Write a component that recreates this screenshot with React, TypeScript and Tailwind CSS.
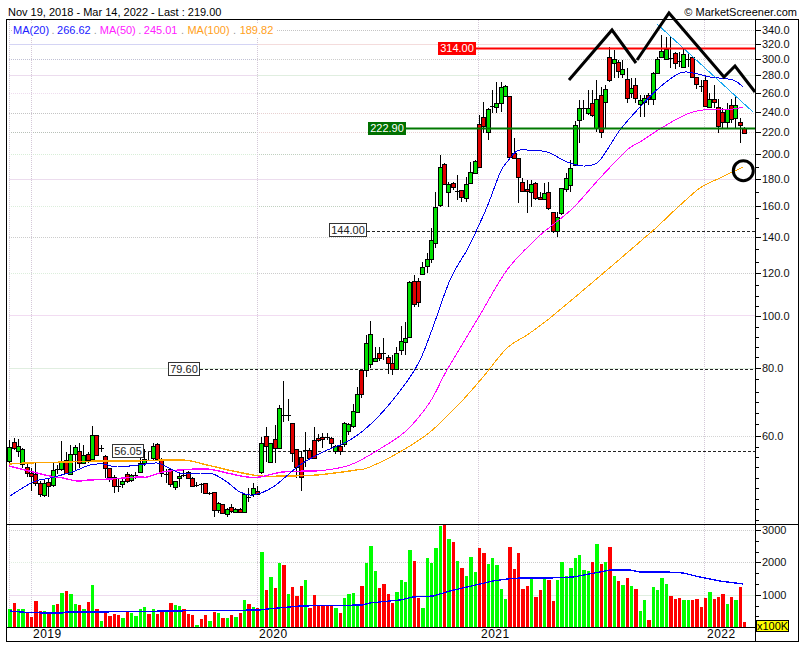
// Weekly candlestick chart with moving averages and a volume pane.
// Drawing coordinates in the svgs are page pixels, kept by each viewBox.

const PLOT_LEFT = 9.3;
const STEP = 4.348;

// top of each volume bar, read off the picture (3x coordinates, bar foot at 336)
const volTops = [
  282, 264, 282, 282, 294, 306, 258, 288, 288, 297,
  270, 267, 234, 228, 237, 267, 270, 282, 261, 210,
  282, 318, 291, 303, 297, 300, 309, 291, 294, 303,
  282, 276, 297, 282, 297, 291, 288, 264, 270, 273,
  282, 297, 300, 330, 312, 300, 318, 291, 294, 309,
  309, 300, 306, 294, 255, 267, 276, 279, 111, 225,
  186, 219, 144, 150, 237, 216, 243, 213, 195, 279,
  240, 270, 273, 273, 273, 279, 294, 249, 237, 234,
  273, 213, 144, 93, 168, 219, 207, 237, 264, 231,
  195, 201, 105, 138, 249, 279, 129, 144, 99, 33,
  28, 72, 81, 138, 159, 183, 126, 171, 99, 114,
  147, 129, 150, 222, 252, 96, 162, 114, 222, 213,
  192, 246, 225, 186, 195, 258, 195, 141, 183, 159,
  129, 120, 165, 168, 141, 87, 147, 141, 96, 183,
  198, 210, 189, 213, 222, 288, 255, 315, 216, 225,
  189, 207, 243, 252, 249, 255, 255, 255, 252, 276,
  249, 231, 252, 246, 237, 267, 246, 255, 216, 321,
];

const volColors = [
  "grggrrrrgr", "grgrggrgrg", "rgrrrrgrgg", "ggrgrrgrgg",
  "rrrgrrgrgr", "grgrgrgrgr", "grgrgrrrgr", "rrrrrgrggg",
  "grgggrrrrg", "gggrrggggg", "rgrgrgggrr", "gggggrrrrr",
  "grrgrrgggg", "ggggrgrgrg", "rgrgrggrgg", "ggrrrggrrr",
  "rgrrrgrgrr",
].join("");

type Row = [number, number, number, number];

const toPage = (rows: Row[], off: number) =>
  rows.map((r) => r.map((z) => off + z / 3) as Row);

// [body top, body bottom, high, low]
const candles: Row[] = [
  ...toPage(
    [
      [202, 243, 180, 248], [186, 205, 175, 210], [198, 214, 178, 232], [207, 252, 205, 265], [260, 280, 245, 292],
      [280, 287, 265, 332], [283, 310, 248, 318], [308, 341, 302, 352], [308, 344, 300, 352], [306, 319, 295, 350],
      [271, 314, 250, 320], [266, 267, 255, 282], [244, 268, 182, 272], [241, 280, 215, 280], [222, 282, 195, 282],
      [202, 222, 196, 270], [214, 250, 190, 265], [226, 248, 195, 252], [223, 241, 215, 248], [166, 237, 138, 240],
      [166, 225, 166, 225], [205, 205, 195, 215], [229, 265, 225, 295], [265, 292, 265, 305], [290, 317, 285, 338],
      [318, 318, 295, 335], [304, 313, 292, 325], [281, 303, 275, 310], [286, 300, 282, 305], [286, 286, 275, 298],
      [250, 275, 225, 280], [237, 250, 208, 258], [239, 239, 215, 240], [198, 235, 190, 240], [192, 237, 190, 240],
      [238, 278, 235, 290], [282, 282, 268, 310], [268, 312, 268, 320], [303, 322, 302, 330], [288, 295, 280, 322],
      [284, 284, 270, 290], [277, 295, 272, 298], [295, 318, 292, 320], [314, 314, 305, 320], [313, 313, 308, 340],
      [310, 340, 310, 342], [338, 338, 335, 345], [337, 390, 337, 412], [370, 390, 367, 400], [373, 400, 373, 403],
      [388, 402, 385, 410], [382, 392, 372, 398], [388, 395, 385, 398], [388, 395, 385, 398], [343, 395, 340, 398],
      [350, 350, 325, 365], [323, 343, 308, 350], [332, 342, 318, 345], [190, 275, 172, 283], [169, 198, 142, 245],
      [190, 245, 190, 250], [178, 205, 135, 250], [85, 205, 75, 205], [106, 106, 3, 125], [106, 106, 57, 123],
      [130, 220, 130, 245], [208, 262, 208, 295], [232, 292, 212, 332], [210, 210, 155, 262], [210, 235, 205, 238],
      [181, 233, 140, 235], [175, 181, 162, 185], [170, 178, 160, 203], [170, 175, 160, 180], [175, 190, 170, 205],
      [199, 214, 195, 222], [199, 214, 180, 225], [130, 193, 125, 200], [133, 152, 128, 165], [92, 138, 72, 145],
      [43, 95, 22, 98],
    ],
    380
  ),
  ...toPage(
    [
      [450, 523, 450, 535], [370, 450, 345, 470], [343, 432, 303, 445], [414, 422, 380, 422], [400, 415, 380, 422],
      [400, 400, 353, 420], [412, 430, 405, 462], [428, 447, 405, 465], [400, 447, 382, 450], [364, 389, 318, 405],
      [355, 367, 307, 405], [186, 352, 182, 355], [184, 253, 165, 262], [184, 247, 175, 262], [141, 161, 125, 162],
      [118, 139, 100, 160], [61, 116, 25, 128],
    ],
    220
  ),
  ...toPage(
    [
      [622, 729, 576, 744], [500, 616, 465, 620], [493, 553, 490, 555], [553, 575, 545, 622], [550, 560, 545, 570],
      [572, 572, 525, 600], [571, 590, 570, 605], [552, 593, 530, 605], [517, 550, 485, 552], [484, 520, 480, 520],
      [373, 502, 345, 505], [352, 378, 305, 400], [328, 397, 325, 420], [319, 319, 270, 340], [310, 322, 245, 340],
      [262, 310, 245, 335], [257, 287, 255, 290], [289, 472, 289, 475], [460, 475, 415, 478], [475, 532, 475, 610],
      [545, 572, 535, 575], [568, 573, 540, 640], [553, 577, 540, 620], [550, 593, 545, 600], [592, 598, 575, 600],
      [580, 598, 550, 600], [576, 625, 545, 630], [635, 693, 635, 698], [650, 693, 635, 710], [565, 640, 565, 645],
      [533, 568, 520, 575], [503, 556, 480, 575], [374, 495, 362, 497], [323, 360, 300, 430], [323, 323, 300, 360],
      [323, 338, 270, 345], [310, 345, 270, 350], [298, 385, 240, 395], [284, 397, 260, 415], [268, 305, 255, 385],
      [172, 240, 140, 245], [178, 190, 150, 235], [186, 214, 180, 235], [208, 222, 180, 235], [236, 295, 205, 310],
      [265, 280, 235, 295], [256, 293, 235, 308], [301, 313, 285, 350], [295, 305, 285, 350], [285, 298, 280, 315],
      [220, 298, 215, 315], [178, 218, 170, 218], [153, 172, 105, 175], [148, 176, 110, 178], [175, 175, 112, 205],
      [160, 188, 155, 208], [184, 184, 155, 200], [163, 200, 145, 202], [176, 176, 155, 200], [172, 230, 172, 232],
      [230, 253, 230, 268], [257, 257, 240, 275], [240, 317, 228, 320], [298, 322, 280, 325], [298, 307, 255, 325],
      [320, 378, 298, 398], [335, 365, 325, 385], [328, 365, 310, 385], [314, 358, 298, 370], [315, 355, 288, 385],
      [367, 376, 355, 430], [384, 400, 380, 402],
    ],
    0
  ),
];

const ma20 =
  "10,496 33,482 50,478 72,472 90,465 103,464 117,467 138,465 157,463 167,467 180,473 200,474 213,474 227,482 240,492 253,495 273,487 300,465 323,452 350,440 375,420 403,387 420,360 433,327 450,280 467,250 473,238 487,207 500,173 507,162 517,151 527,150 547,152 567,162 583,166 597,163 607,150 620,130 640,107 660,87 680,73 693,73 710,77 733,80 743,87";
const ma50 =
  "9,466 37,473 50,476 63,478 77,481 90,480 110,479 138,477 147,477 163,472 180,470 207,469 227,473 247,477 260,477 283,472 317,471 350,465 383,447 407,430 430,402 447,370 477,320 507,270 535,240 550,227 573,208 600,178 627,150 640,142 663,127 687,114 703,110 733,109 743,107";
const ma100 =
  "9,464 27,463 67,462 100,461 133,461 183,460 207,465 233,471 260,476 283,476 317,475 357,470 370,467 400,452 430,432 460,403 483,377 507,348 527,335 550,318 600,276 642,240 657,227 677,208 700,188 720,178 743,167";
const volMa =
  "10,611 20,612 43,613 63,613 65,612 100,612 167,611 170,611 260,610 267,609 278,608 300,606 362,605 370,603 380,602 390,601 400,600 413,597 433,596 450,591 467,587 493,581 507,579 520,578 550,578 573,577 600,572 610,570 630,570 640,572 667,572 683,573 700,577 720,581 743,584";

// the moving averages are only sampled, so round them out into a curve
function smooth(points: string, maxX = Infinity) {
  const p = points
    .split(" ")
    .map((s) => s.split(",").map(Number))
    .filter(([x]) => x <= maxX);
  let d = `M${p[0][0]},${p[0][1]}`;
  for (let i = 0; i < p.length - 1; i++) {
    const a = p[Math.max(i - 1, 0)];
    const b = p[i];
    const c = p[i + 1];
    const e = p[Math.min(i + 2, p.length - 1)];
    const c1x = b[0] + (c[0] - a[0]) / 6;
    const c1y = b[1] + (c[1] - a[1]) / 6;
    const c2x = c[0] - (e[0] - b[0]) / 6;
    const c2y = c[1] - (e[1] - b[1]) / 6;
    d += ` C${c1x},${c1y} ${c2x},${c2y} ${c[0]},${c[1]}`;
  }
  return d;
}

// price grid: left of 2020 and right of 2020 have their own tints, as in the picture
const grid: { y: number; l: string; r: string; dot?: boolean }[] = [
  { y: 30, l: "#c4c4c4", r: "#c4c4c4", dot: true },
  { y: 44, l: "#d4d4f4", r: "#f4dcdc" },
  { y: 59, l: "#c0c0d4", r: "#cccccc", dot: true },
  { y: 75, l: "#ecdcee", r: "#e0eee0" },
  { y: 93, l: "#eedcee", r: "#cccccc", dot: true },
  { y: 113, l: "#c4c4c4", r: "#e8d0d0", dot: true },
  { y: 132, l: "#b8c0b8", r: "#e8d0d0", dot: true },
  { y: 154, l: "#d8eed8", r: "#c0d0c0", dot: true },
  { y: 179, l: "#ecdcee", r: "#ecdcee" },
  { y: 206, l: "#dceedc", r: "#c0d0c0", dot: true },
  { y: 237, l: "#cccccc", r: "#cccccc", dot: true },
  { y: 273, l: "#dceedc", r: "#cccccc", dot: true },
  { y: 315, l: "#f2dcf2", r: "#f2dcf2" },
  { y: 368, l: "#e0eee0", r: "#e0eee0" },
  { y: 436, l: "#cccccc", r: "#d4d4d4", dot: true },
];

const volGrid: { y: number; l: string; r: string; dot?: boolean }[] = [
  { y: 530, l: "#cccccc", r: "#cccccc", dot: true },
  { y: 562, l: "#e0eee0", r: "#cccccc", dot: true },
  { y: 595, l: "#eedcee", r: "#e0eee0" },
];

const verticals = [9, 31, 257, 478, 704];

const priceLabels: [string, number][] = [
  ["340.0", 30], ["320.0", 44], ["300.0", 59], ["280.0", 75], ["260.0", 93], ["240.0", 112],
  ["220.0", 132], ["200.0", 154], ["180.0", 179], ["160.0", 206], ["140.0", 237], ["120.0", 273],
  ["100.0", 316], ["80.0", 368], ["60.0", 436],
];
const priceMinor = [
  167, 192, 218, 249, 262, 285, 296, 306, 327, 337, 347, 357, 379, 392, 402, 413, 424, 447, 457, 467, 478, 488, 499,
  509, 520,
];
const volLabels: [string, number][] = [["3000", 530], ["2000", 562], ["1000", 595]];
const volMinor = [541, 552, 573, 584, 606, 616];

function GridLines({
  rows,
  top,
  bottom,
}: {
  rows: { y: number; l: string; r: string; dot?: boolean }[];
  top: number;
  bottom: number;
}) {
  return (
    <g shapeRendering="crispEdges">
      {rows.map((g) => (
        <g key={g.y}>
          <line x1={9} x2={257} y1={g.y + 0.5} y2={g.y + 0.5} stroke={g.l} strokeDasharray={g.dot ? "1 1" : undefined} />
          <line x1={257} x2={755} y1={g.y + 0.5} y2={g.y + 0.5} stroke={g.r} strokeDasharray={g.dot ? "1 1" : undefined} />
        </g>
      ))}
      {verticals.map((x) => (
        <line key={x} x1={x + 0.5} x2={x + 0.5} y1={top} y2={bottom} stroke="#d4c8d8" strokeDasharray="1 1" />
      ))}
    </g>
  );
}

function Candles() {
  return (
    <g shapeRendering="crispEdges">
      {candles.map(([top, bottom, high, low], i) => {
        const x = Math.round(PLOT_LEFT + STEP * i);
        const fill = volColors[i] === "g" ? "#00e000" : "#e00000";
        const t = Math.round(top);
        const b = Math.round(bottom);
        return (
          <g key={i}>
            <line x1={x + 0.5} x2={x + 0.5} y1={high} y2={low} stroke="#000" />
            {b - t < 2 ? (
              <line x1={x - 2} x2={x + 3} y1={t + 0.5} y2={t + 0.5} stroke="#000" />
            ) : (
              <rect x={x - 1.5} y={t + 0.5} width={4} height={b - t} fill={fill} stroke="#000" />
            )}
          </g>
        );
      })}
    </g>
  );
}

function Badge({ text, className }: { text: string; className: string }) {
  return (
    <div className={"absolute flex items-center justify-center text-[11px] leading-none " + className}>{text}</div>
  );
}

function PriceChart() {
  return (
    <div className="relative w-[748px] h-[504px]">
      <svg width={748} height={504} viewBox="7 20 748 504" className="block overflow-visible">
        <GridLines rows={grid} top={20} bottom={524} />
        <g shapeRendering="crispEdges">
          <line x1={200} x2={755} y1={369.5} y2={369.5} stroke="#222" strokeDasharray="3 2" />
          <line x1={367} x2={755} y1={231.5} y2={231.5} stroke="#222" strokeDasharray="3 2" />
          <line x1={143} x2={755} y1={451.5} y2={451.5} stroke="#222" strokeDasharray="3 2" />
        </g>
        <Candles />
        <g fill="none" shapeRendering="crispEdges">
          <path d={smooth(ma100)} stroke="#ffa500" />
          <path d={smooth(ma100, 360)} stroke="#ffa500" strokeWidth={1.4} />
          <path d={smooth(ma50)} stroke="#ff00ff" />
          <path d={smooth(ma50, 320)} stroke="#ff00ff" strokeWidth={1.4} />
          <path d={smooth(ma20)} stroke="#0000ee" />
          <line x1={657} y1={24} x2={753} y2={112} stroke="#18a8f0" />
        </g>
        <rect x={476} y={47.5} width={279} height={2} fill="#ff0000" />
        <rect x={406} y={127.5} width={349} height={2} fill="#007800" />
        <polyline points="569,80 612,30 636,63" fill="none" stroke="#000" strokeWidth={3} />
        <polyline points="637,60 669,13 724,77 735,66 755,92" fill="none" stroke="#000" strokeWidth={3} />
        <circle cx={743.3} cy={170.7} r={10} fill="none" stroke="#000" strokeWidth={3} />
      </svg>

      {/* legend sits on a white strip over the grid */}
      <div className="absolute left-[6px] top-[3px] flex bg-white text-[11px] leading-[14px] whitespace-nowrap pr-[4px]">
        <span className="text-[#2020ff]">MA(20)</span>
        <span className="text-[#999] w-[8px] text-center">.</span>
        <span className="text-[#2020ff]">266.62</span>
        <span className="text-[#999] w-[9px] text-center">.</span>
        <span className="text-[#ff20ff]">MA(50)</span>
        <span className="text-[#999] w-[8px] text-center">.</span>
        <span className="text-[#ff20ff]">245.01</span>
        <span className="text-[#999] w-[10px] text-center">.</span>
        <span className="text-[#ffa020]">MA(100)</span>
        <span className="text-[#999] w-[10px] text-center">.</span>
        <span className="text-[#ffa020]">189.82</span>
      </div>

      <Badge text="314.00" className="left-[431px] top-[22px] w-[38px] h-[13px] bg-[#ff0000] text-white" />
      <Badge text="222.90" className="left-[361px] top-[102px] w-[38px] h-[13px] bg-[#007000] text-white" />
      <Badge text="144.00" className="left-[322px] top-[203px] w-[38px] h-[14px] bg-white border border-[#333] text-[#222]" />
      <Badge text="79.60" className="left-[161px] top-[342px] w-[32px] h-[14px] bg-white border border-[#333] text-[#222]" />
      <Badge text="56.05" className="left-[105px] top-[424px] w-[32px] h-[14px] bg-white border border-[#333] text-[#222]" />
    </div>
  );
}

function VolumeChart() {
  return (
    <svg width={748} height={102} viewBox="7 525 748 102" className="block">
      <GridLines rows={volGrid} top={525} bottom={627} />
      <g shapeRendering="crispEdges">
        {volTops.map((z, i) => {
          const x = Math.round(PLOT_LEFT + STEP * i) - 1;
          const next = Math.round(PLOT_LEFT + STEP * (i + 1)) - 1;
          const y = Math.max(525, Math.round(515 + z / 3));
          return (
            <rect key={i} x={x} y={y} width={next - x - 1} height={627 - y} fill={volColors[i] === "g" ? "#00ff00" : "#ff0000"} />
          );
        })}
      </g>
      <polyline points={volMa} fill="none" stroke="#0000ff" strokeWidth={1.3} shapeRendering="crispEdges" />
    </svg>
  );
}

function Axis({
  labels,
  minor,
  top,
  height,
}: {
  labels: [string, number][];
  minor: number[];
  top: number;
  height: number;
}) {
  return (
    <svg width={42} height={height} viewBox={`756 ${top} 42 ${height}`} className="block">
      <g shapeRendering="crispEdges">
        {minor.map((y) => (
          <line key={y} x1={756} x2={759} y1={y + 0.5} y2={y + 0.5} stroke="#000" />
        ))}
        {labels.map(([text, y]) => (
          <line key={text} x1={756} x2={761} y1={y + 0.5} y2={y + 0.5} stroke="#000" />
        ))}
      </g>
      {labels.map(([text, y]) => (
        <text key={text} x={762} y={y + 4} fontSize={11} fill="#111">
          {text}
        </text>
      ))}
    </svg>
  );
}

export default function App() {
  return (
    <div className="w-[805px] h-[650px] bg-white overflow-hidden font-['Liberation_Sans',Arial,sans-serif] text-black">
      <div className="flex justify-between items-end h-[19px] pl-[8px] pr-[8px] text-[11px] leading-[13px]">
        <span>Nov 19, 2018 - Mar 14, 2022 - Last : 219.00</span>
        <span>© MarketScreener.com</span>
      </div>

      <div className="ml-[6px] w-[793px] h-[623px] border border-black">
        <div className="flex border-b border-black">
          <PriceChart />
          <div className="border-l border-black">
            <Axis labels={priceLabels} minor={priceMinor} top={20} height={504} />
          </div>
        </div>

        <div className="flex">
          <div className="w-[748px]">
            <div className="border-b border-black">
              <VolumeChart />
            </div>
            <div className="flex h-[13px] text-[12px] leading-[13px] tracking-[0.5px]">
              <span className="ml-[26px] w-[226px]">2019</span>
              <span className="w-[222px]">2020</span>
              <span className="w-[226px]">2021</span>
              <span>2022</span>
            </div>
          </div>
          <div className="relative border-l border-black">
            <Axis labels={volLabels} minor={volMinor} top={525} height={116} />
            <div className="absolute left-0 top-[95px] w-[33px] h-[12px] flex items-center justify-center bg-[#ffff00] border border-black text-[11px] leading-none">
              x100K
            </div>
          </div>
        </div>
      </div>
    </div>
  );
}
